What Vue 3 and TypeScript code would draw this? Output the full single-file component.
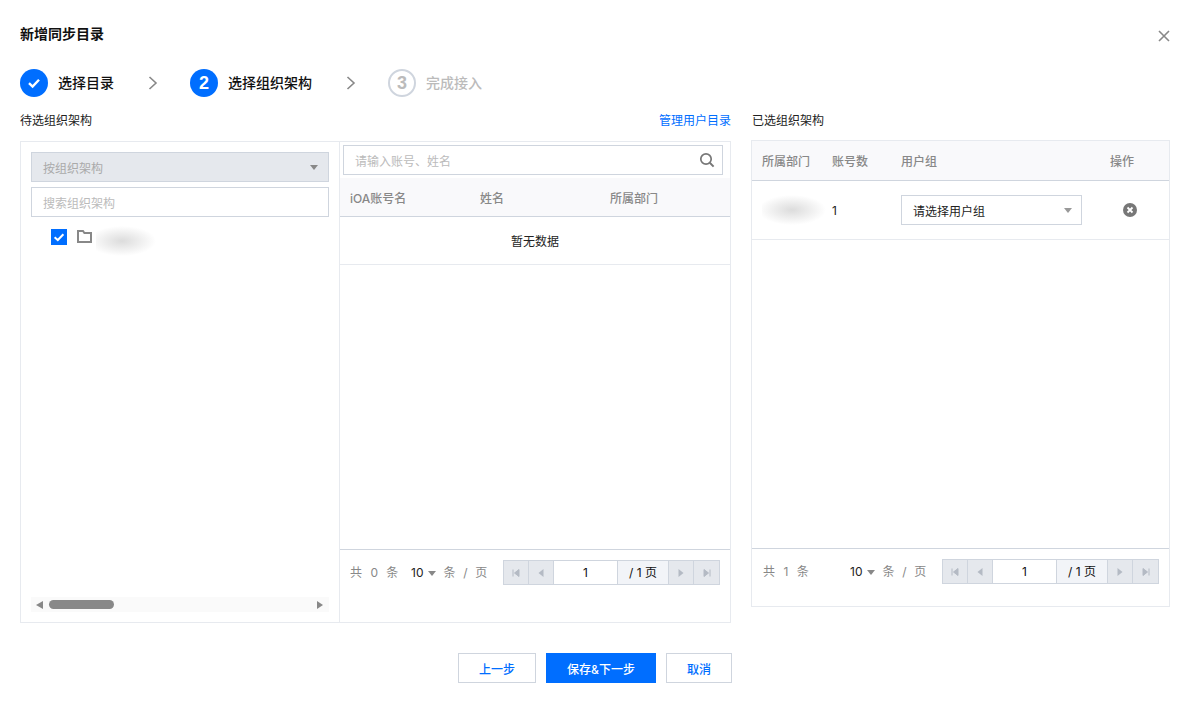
<script setup lang="ts">
interface PagerData { total: number }
const leftPager: PagerData = { total: 0 }
const rightPager: PagerData = { total: 1 }
const cols: string[] = ['iOA账号名', '姓名', '所属部门']
</script>

<template>
  <div class="dialog">
    <div class="title-row">
      <h1 class="title">新增同步目录</h1>
      <svg class="close" width="14" height="14" viewBox="0 0 14 14"><path d="M2 2 12 12M12 2 2 12" stroke="#888" stroke-width="1.6" fill="none" /></svg>
    </div>

    <div class="steps">
      <div class="step s1">
        <span class="circle done"><svg width="16" height="16" viewBox="0 0 16 16"><path d="M3 8.2 6.6 11.6 13 4.8" stroke="#fff" stroke-width="2.4" fill="none" /></svg></span>
        <span class="step-label">选择目录</span>
      </div>
      <svg class="chev c1" width="10" height="14" viewBox="0 0 10 14"><path d="M1.5 1 8 7 1.5 13" stroke="#888" stroke-width="1.6" fill="none" /></svg>
      <div class="step s2">
        <span class="circle active">2</span>
        <span class="step-label">选择组织架构</span>
      </div>
      <svg class="chev c2" width="10" height="14" viewBox="0 0 10 14"><path d="M1.5 1 8 7 1.5 13" stroke="#888" stroke-width="1.6" fill="none" /></svg>
      <div class="step">
        <span class="circle todo">3</span>
        <span class="step-label muted">完成接入</span>
      </div>
    </div>

    <div class="columns">
      <section class="left-col">
        <div class="section-head">
          <span>待选组织架构</span>
          <a class="link">管理用户目录</a>
        </div>
        <div class="left-panel">
          <div class="tree-col">
            <div class="select disabled"><span>按组织架构</span><i class="tri dark"></i></div>
            <div class="input tree-search">搜索组织架构</div>
            <div class="tree-node">
              <span class="check"><svg width="16" height="16" viewBox="0 0 16 16"><path d="M3.6 8.2 6.8 11 12.4 5.2" stroke="#fff" stroke-width="2" fill="none" /></svg></span>
              <svg class="folder" width="15" height="13" viewBox="0 0 15 13"><path d="M1 12V1h5l1.4 2H14v9z" fill="none" stroke="#888" stroke-width="2" /></svg>
              <span class="blur tree-blur"></span>
            </div>
            <div class="hscroll">
              <i class="arrow-l"></i>
              <span class="thumb"></span>
              <i class="arrow-r"></i>
            </div>
          </div>
          <div class="list-col">
            <div class="list-search">
              <div class="input search-box">
                <span>请输入账号、姓名</span>
                <svg width="16" height="16" viewBox="0 0 16 16"><circle cx="7" cy="7" r="5.2" fill="none" stroke="#777" stroke-width="1.7" /><path d="M10.8 10.8 14.6 14.6" stroke="#777" stroke-width="2" /></svg>
              </div>
            </div>
            <div class="list-head">
              <span v-for="c in cols" :key="c">{{ c }}</span>
            </div>
            <div class="empty">暂无数据</div>
            <div class="spacer"></div>
            <div class="pager-row left-pager">
              <span class="total">共 {{ leftPager.total }} 条</span>
              <span class="size">10</span><i class="tri small"></i><span class="per">条 / 页</span>
              <div class="pager">
                <span class="pg"><svg width="10" height="10" viewBox="0 0 10 10"><path d="M2 1.5v7M8 1.5v7L3.5 5z" stroke="#b4bac4" fill="#b4bac4" /></svg></span>
                <span class="pg"><svg width="10" height="10" viewBox="0 0 10 10"><path d="M7.5 1v8L2.5 5z" fill="#b4bac4" /></svg></span>
                <span class="pg-input">1</span>
                <span class="pg-count">/ 1 页</span>
                <span class="pg"><svg width="10" height="10" viewBox="0 0 10 10"><path d="M2.5 1v8l5-4z" fill="#b4bac4" /></svg></span>
                <span class="pg last"><svg width="10" height="10" viewBox="0 0 10 10"><path d="M8 1.5v7M2 1.5v7L6.5 5z" stroke="#b4bac4" fill="#b4bac4" /></svg></span>
              </div>
            </div>
          </div>
        </div>
      </section>

      <section class="right-col">
        <div class="section-head right-head"><span>已选组织架构</span></div>
        <div class="right-panel">
          <div class="right-grid right-title">
            <span>所属部门</span><span>账号数</span><span>用户组</span><span class="op">操作</span>
          </div>
          <div class="right-grid right-row">
            <span class="blur dept-blur"></span>
            <span class="num">1</span>
            <div class="select group"><span>请选择用户组</span><i class="tri"></i></div>
            <svg class="remove" width="14" height="14" viewBox="0 0 14 14"><circle cx="7" cy="7" r="7" fill="#777" /><path d="M4.5 4.5 9.500 9.500M9.500 4.500 4.500 9.500" stroke="#fff" stroke-width="1.8" /></svg>
          </div>
          <div class="spacer"></div>
          <div class="pager-row right-pager">
            <span class="total wide">共 {{ rightPager.total }} 条</span>
            <span class="size">10</span><i class="tri small"></i><span class="per">条 / 页</span>
            <div class="pager">
              <span class="pg"><svg width="10" height="10" viewBox="0 0 10 10"><path d="M2 1.5v7M8 1.5v7L3.5 5z" stroke="#b4bac4" fill="#b4bac4" /></svg></span>
              <span class="pg"><svg width="10" height="10" viewBox="0 0 10 10"><path d="M7.5 1v8L2.5 5z" fill="#b4bac4" /></svg></span>
              <span class="pg-input">1</span>
              <span class="pg-count">/ 1 页</span>
              <span class="pg"><svg width="10" height="10" viewBox="0 0 10 10"><path d="M2.500 1v8l5-4z" fill="#b4bac4" /></svg></span>
              <span class="pg last"><svg width="10" height="10" viewBox="0 0 10 10"><path d="M8 1.5v7M2 1.500v7L6.500 5z" stroke="#b4bac4" fill="#b4bac4" /></svg></span>
            </div>
          </div>
        </div>
      </section>
    </div>

    <div class="actions">
      <button class="btn prev">上一步</button>
      <button class="btn primary">保存&amp;下一步</button>
      <button class="btn cancel">取消</button>
    </div>
  </div>
</template>

<style scoped>
.dialog {
  width: 1189px;
  height: 701px;
  box-sizing: border-box;
  padding: 24px 19px 0 20px;
  font-family: "Inter", "Liberation Sans", "Noto Sans CJK SC", sans-serif;
  font-size: 12px;
  color: #111;
  background: #fff;
  overflow: hidden;
}
.title-row { display: flex; justify-content: space-between; align-items: flex-start; height: 45px; }
.title { margin: 0; font-size: 14px; line-height: 20px; font-weight: 600; color: #111; }
.close { margin-top: 5px; margin-right: -1px; }

.steps { display: flex; align-items: center; height: 28px; }
.step { display: flex; align-items: center; }
.circle {
  width: 28px; height: 28px; border-radius: 50%; box-sizing: border-box;
  display: flex; align-items: center; justify-content: center;
  font-size: 18px; font-weight: 600; font-family: "Liberation Sans", sans-serif;
}
.done, .active { background: #006eff; color: #fff; }
.todo { border: 2px solid #cfd5de; color: #bbb; }
.step-label { margin-left: 10px; font-size: 14px; line-height: 28px; font-weight: 500; width: auto; }
.muted { color: #bbb; }
.s1 { width: 128px; }
.s2 { width: 156px; }
.chev { flex: none; }
.c1 { margin-right: 32px; }
.c2 { margin-right: 32px; }

.columns { display: flex; align-items: flex-start; margin-top: 14px; }
.left-col { width: 711px; }
.right-col { width: 419px; margin-left: 20px; }
.section-head {
  display: flex; justify-content: space-between; align-items: center;
  height: 20px; line-height: 20px; margin-bottom: 10px; color: #222;
}
.right-head { margin-bottom: 9px; margin-left: 1px; }
.link { color: #006eff; }

.left-panel {
  display: flex; height: 482px; box-sizing: border-box;
  border: 1px solid #e7eaef;
}
.tree-col {
  width: 319px; box-sizing: border-box; flex: none;
  padding: 10px 10px 10px 10px;
  border-right: 1px solid #e7eaef;
  display: flex; flex-direction: column;
}
.select, .input {
  box-sizing: border-box; height: 30px; border: 1px solid #cfd5de;
  display: flex; align-items: center; justify-content: space-between;
  padding: 0 10px 0 11px; background: #fff;
}
.input { color: #bbb; }
.disabled { background: #e5e8ed; color: #aaa; width: 298px; }
.tree-search { width: 298px; margin-top: 5px; }
.tri {
  width: 0; height: 0; flex: none;
  border-left: 4px solid transparent; border-right: 4px solid transparent;
  border-top: 5px solid #999;
}
.tri.dark { border-top-color: #888; }
.tree-node { display: flex; align-items: flex-start; padding: 8px 0 0 20px; height: 41px; flex: none; }
.check {
  width: 16px; height: 16px; background: #006eff; margin-top: 4px; flex: none;
  display: block;
}
.check svg { display: block; }
.folder { margin: 5px 0 0 10px; flex: none; }
.blur { display: block; flex: none; }
.tree-blur {
  width: 68px; height: 33px; margin-left: 4px;
  background: radial-gradient(ellipse 34px 15px at 26px 16px, #dcdcdc 0%, #efefef 55%, #fff 100%);
}
.hscroll {
  margin-top: auto; margin-bottom: 0; height: 15px; width: 298px; background: #fafafa; flex: none;
  display: flex; align-items: center; padding: 0 6px 0 5px; box-sizing: border-box;
}
.thumb { width: 65px; height: 9px; border-radius: 5px; background: #888; margin-left: 6px; margin-right: auto; }
.arrow-l, .arrow-r { width: 0; height: 0; border-top: 4px solid transparent; border-bottom: 4px solid transparent; }
.arrow-l { border-right: 7px solid #888; }
.arrow-r { border-left: 6px solid #888; }

.list-col { flex: 1; display: flex; flex-direction: column; min-width: 0; }
.list-search { padding: 3px 7px 3px 3px; }
.search-box { width: 380px; padding-right: 7px; }
.list-head {
  display: grid; grid-template-columns: 130px 130px 1fr; align-items: center;
  height: 39px; box-sizing: border-box; padding: 0 0 0 10px; flex: none;
  background: #f9f9fb; border-bottom: 1px solid #cfd5de; color: #888; font-weight: 500;
}
.empty {
  height: 48px; box-sizing: border-box; border-bottom: 1px solid #e7eaef; flex: none;
  display: flex; align-items: center; justify-content: center; color: #222;
}
.spacer { flex: 1; }
.pager-row {
  display: flex; align-items: flex-start; flex: none; box-sizing: border-box;
  border-top: 1px solid #cfd5de; padding-top: 10px;
  color: #888; line-height: 25px;
}
.left-pager { height: 73px; padding-left: 10px; padding-right: 10px; }
.right-pager { height: 58px; padding-left: 11px; padding-right: 10px; }
.total { width: 61px; letter-spacing: 2.5px; }
.total.wide { width: 87px; }
.size { color: #222; }
.tri.small { margin: 11px 7px 0 5px; }
.tri.small { border-top-color: #888; }
.per { letter-spacing: 2.2px; white-space: nowrap; }
.pager {
  margin-left: auto; display: flex; height: 25px; box-sizing: border-box; width: 217px;
  border: 1px solid #cfd5de; color: #222;
}
.pg {
  width: 25px; flex: none; background: #e5e8ed; border-right: 1px solid #cfd5de; box-sizing: border-box;
  display: flex; align-items: center; justify-content: center;
}
.pg.last { border-right: 0; width: 25px; }
.pg-input {
  width: 64px; flex: none; background: #fff; border-right: 1px solid #cfd5de; box-sizing: border-box;
  line-height: 23px; text-align: center; color: #111;
}
.pg-count {
  flex: 1; background: #f2f4f8; border-right: 1px solid #cfd5de; box-sizing: border-box;
  line-height: 23px; text-align: center; color: #111; word-spacing: 0;
}

.right-panel {
  height: 467px; box-sizing: border-box; border: 1px solid #e7eaef;
  display: flex; flex-direction: column;
}
.right-grid { display: grid; grid-template-columns: 70px 69px 208px 1fr; align-items: center; padding-left: 10px; flex: none; }
.right-title {
  height: 40px; box-sizing: border-box; background: #f9f9fb;
  border-bottom: 1px solid #cfd5de; color: #888; font-weight: 500;
}
.op { margin-left: 1px; }
.right-row { height: 59px; box-sizing: border-box; border-bottom: 1px solid #e7eaef; }
.dept-blur {
  width: 66px; height: 33px;
  background: radial-gradient(ellipse 34px 15px at 30px 16px, #dcdcdc 0%, #efefef 55%, #fff 100%);
}
.num { color: #222; }
.group { width: 181px; color: #222; padding-right: 9px; }
.remove { margin-left: 14px; }

.actions { display: flex; gap: 10px; margin-top: 30px; padding-left: 438px; }
.btn {
  height: 30px; box-sizing: border-box; padding: 0; border: 1px solid #cfd5de; background: #fff;
  color: #006eff; font: inherit; font-weight: 500;
}
.prev { width: 78px; }
.primary { width: 110px; background: #006eff; border-color: #006eff; color: #fff; }
.cancel { width: 66px; }
</style>
